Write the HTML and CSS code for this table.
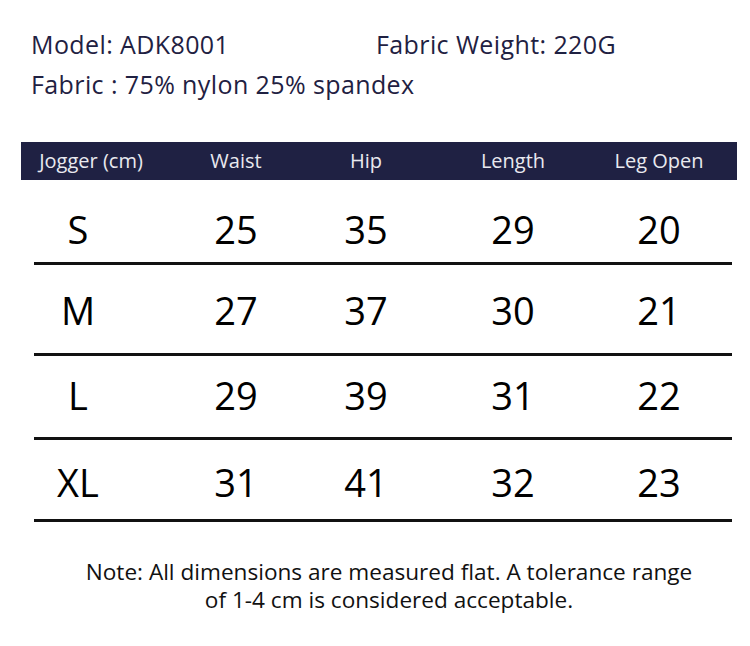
FILE: index.html
```html
<!DOCTYPE html>
<html lang="en">
<head>
<meta charset="utf-8">
<title>Jogger Size Chart</title>
<link rel="stylesheet" href="styles.css">
</head>
<body>
<div class="page">
  <div class="info">
    <div class="info-line">
      <span class="model">Model: ADK8001</span>
      <span>Fabric Weight: 220G</span>
    </div>
    <div class="info-line">Fabric : 75% nylon 25% spandex</div>
  </div>

  <div class="table">
    <div class="thead">
      <div class="cell">Jogger (cm)</div>
      <div class="cell">Waist</div>
      <div class="cell">Hip</div>
      <div class="cell">Length</div>
      <div class="cell">Leg Open</div>
    </div>
    <div class="trow row-s">
      <div class="cell size">S</div>
      <div class="cell">25</div>
      <div class="cell">35</div>
      <div class="cell">29</div>
      <div class="cell">20</div>
    </div>
    <div class="trow row-m">
      <div class="cell size">M</div>
      <div class="cell">27</div>
      <div class="cell">37</div>
      <div class="cell">30</div>
      <div class="cell">21</div>
    </div>
    <div class="trow row-l">
      <div class="cell size">L</div>
      <div class="cell">29</div>
      <div class="cell">39</div>
      <div class="cell">31</div>
      <div class="cell">22</div>
    </div>
    <div class="trow row-xl">
      <div class="cell size">XL</div>
      <div class="cell">31</div>
      <div class="cell">41</div>
      <div class="cell">32</div>
      <div class="cell">23</div>
    </div>
  </div>

  <p class="note">Note: All dimensions are measured flat. A tolerance range<br>of 1-4 cm is considered acceptable.</p>
</div>
</body>
</html>
```

FILE: styles.css
```css
* { box-sizing: border-box; }

html, body {
  margin: 0;
  padding: 0;
  background: #ffffff;
}

body {
  font-family: "Open Sans", "Noto Sans", sans-serif;
  width: 750px;
  height: 646px;
  overflow: hidden;
}

.info {
  padding: 24px 0 0 31px;
  color: #1f2142;
  font-size: 25px;
  line-height: 40px;
  letter-spacing: 0.4px;
}

.info-line {
  display: flex;
  white-space: nowrap;
}

.model {
  width: 345px;
}

.table {
  margin: 38px 0 0 21px;
  width: 716px;
}

.thead {
  display: grid;
  grid-template-columns: 140px 150px 110px 184px 108px;
  height: 38px;
  background: #1f2143;
  color: #e9e9ef;
  font-size: 20px;
  line-height: 38px;
  white-space: nowrap;
}

.cell {
  text-align: center;
}

.trow {
  display: grid;
  grid-template-columns: 127px 150px 110px 184px 108px;
  margin: 0 5px 0 13px;
  border-bottom: 3px solid #111;
  color: #000;
  font-size: 38px;
  line-height: 38px;
}

.trow .size {
  padding-right: 39px;
}

.row-s { height: 85px; padding-top: 30px; }
.row-m { height: 91px; padding-top: 26px; }
.row-l { height: 84px; padding-top: 20px; }
.row-xl { height: 82px; padding-top: 23px; }

.note {
  margin: 36px 0 0 0;
  padding-left: 28px;
  text-align: center;
  color: #111;
  font-size: 22.6px;
  line-height: 28px;
}
```
